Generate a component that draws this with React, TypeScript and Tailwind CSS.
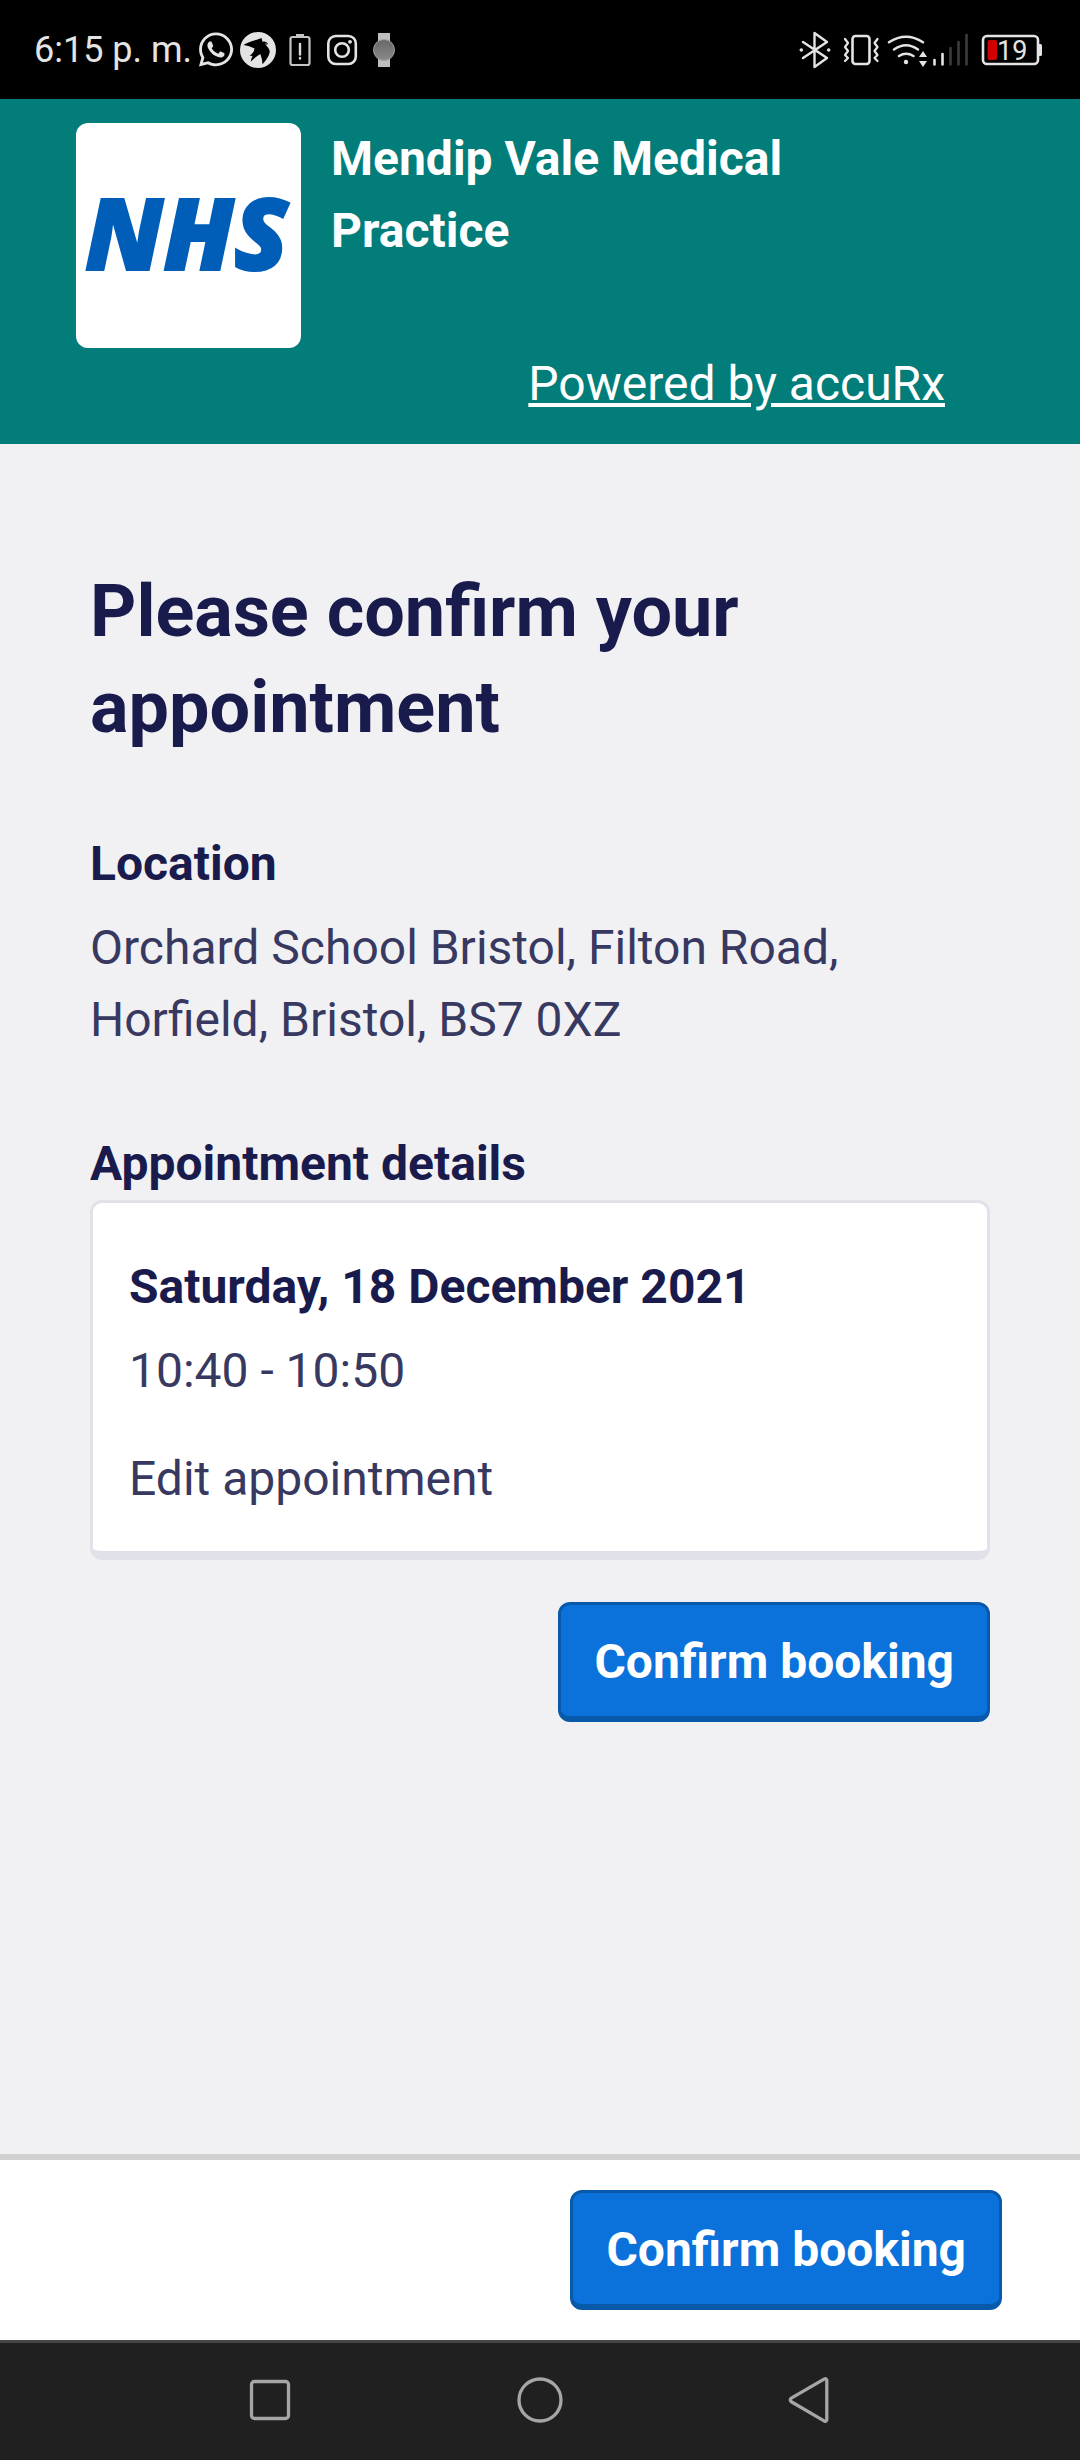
import type { ButtonHTMLAttributes } from 'react';
import { FaWhatsapp } from 'react-icons/fa';

const BluetoothIcon = () => (
  <svg width="42" height="40" viewBox="0 0 42 40" fill="none" aria-hidden="true">
    <path d="M6 12 30 28 17.5 37V3L30 12 6 28" stroke="#e4e4e4" strokeWidth="2.4" strokeLinejoin="round" strokeLinecap="round" />
    <circle cx="4.3" cy="20" r="1.8" fill="#e4e4e4" />
    <circle cx="31.7" cy="20" r="1.8" fill="#e4e4e4" />
  </svg>
);

const VibrateIcon = () => (
  <svg width="40" height="40" viewBox="0 0 40 40" fill="none" stroke="#e4e4e4" strokeLinecap="round" strokeLinejoin="round" aria-hidden="true">
    <rect x="9.5" y="6" width="17" height="28" rx="3" strokeWidth="2.6" />
    <path d="M2 9l3 4-3 4 3 4-3 4 3 3-3 3M34.5 9l-3 4 3 4-3 4 3 4-3 3 3 3" strokeWidth="2.2" />
  </svg>
);

const WifiIcon = () => (
  <svg width="42" height="40" viewBox="0 0 42 40" fill="none" aria-hidden="true">
    <g stroke="#e4e4e4" strokeWidth="2.5" strokeLinecap="round">
      <path d="M2 12.3Q19 1 36 12.3" />
      <path d="M7 19.5Q19 11 31 19.5" />
      <path d="M12 26Q19 21.5 26.5 26" />
    </g>
    <circle cx="19" cy="32" r="2.2" fill="#e4e4e4" />
    <path d="M36 21l4 6h-8zM36 37l4-6h-8z" fill="#e4e4e4" />
  </svg>
);

const SignalIcon = () => (
  <svg width="40" height="40" viewBox="0 0 40 40" strokeWidth="2.6" strokeLinecap="round" aria-hidden="true">
    <path d="M1.5 30v4.5M9.5 24v10.5" stroke="#e4e4e4" />
    <path d="M17.5 18v16.5M25.5 12v22.5M33.5 5v29.5" stroke="#3d3d3d" />
  </svg>
);

const BatteryIcon = () => (
  <svg width="66" height="40" viewBox="0 0 66 40" aria-hidden="true">
    <rect x="6" y="6" width="55" height="28" rx="4" fill="none" stroke="#e4e4e4" strokeWidth="2.6" />
    <path d="M62 14h1.5a1.5 1.5 0 0 1 1.5 1.5v9a1.5 1.5 0 0 1-1.5 1.5H62z" fill="#e4e4e4" />
    <rect x="10.5" y="10" width="9.5" height="20" rx="2" fill="#d00000" />
    <text x="20" y="30" fontSize="27" fill="#e4e4e4" className="font-[Roboto]">19</text>
  </svg>
);

const BirdIcon = () => (
  <svg width="36" height="36" viewBox="0 0 36 36" aria-hidden="true">
    <circle cx="18" cy="18" r="18" fill="#e4e4e4" />
    <path
      d="M3.5 13C8 9.5 14 9 21.5 6l1 3.7q3-1 5.5 2l-2 1.8q4 3.5 3.7 6.5Q29 25 22.5 32.3q-.3-6-2.2-10.3-5 3-9.6 7.7.6-3.2 1.8-5.7l-3-.5q4.5-2.5 5-7Q9.5 13.5 3.5 13z"
      fill="#000"
    />
    <circle cx="26" cy="12" r=".7" fill="#e4e4e4" />
  </svg>
);

const BatteryAlertIcon = () => (
  <svg width="36" height="36" viewBox="0 0 36 36" fill="none" aria-hidden="true">
    <rect x="8.5" y="5" width="19" height="28" rx="2" stroke="#c4c4c4" strokeWidth="2.2" />
    <path d="M14 2h8v3h-8z" fill="#c4c4c4" />
    <path d="M18 12v10.5M18 26v.5" stroke="#d8d8d8" strokeWidth="2.4" strokeLinecap="round" />
  </svg>
);

const InstagramIcon = () => (
  <svg width="36" height="36" viewBox="0 0 36 36" fill="none" stroke="#e4e4e4" strokeWidth="2.6" aria-hidden="true">
    <rect x="4.3" y="4" width="27.5" height="28" rx="7.5" />
    <circle cx="18" cy="18" r="6.8" />
    <circle cx="26" cy="9.8" r="1.9" fill="#e4e4e4" stroke="none" />
  </svg>
);

const WatchIcon = () => (
  <svg width="36" height="36" viewBox="0 0 36 36" aria-hidden="true">
    <defs>
      <linearGradient id="watch-face" x1="0" y1="0" x2="0" y2="1">
        <stop offset="0" stopColor="#686868" />
        <stop offset="1" stopColor="#8a8a8a" />
      </linearGradient>
    </defs>
    <path d="M12 1h12v34H12z" fill="#bdbdbd" />
    <circle cx="18" cy="18" r="10.5" fill="url(#watch-face)" stroke="#a0a0a0" />
  </svg>
);

function StatusBar() {
  return (
    <div className="flex h-[99px] items-center justify-between bg-black pl-[34px] pr-[37px] text-[#e4e4e4]">
      <div className="flex items-center gap-[6px]">
        <span className="text-[36px] leading-[48px]">6:15 p. m.</span>
        <FaWhatsapp className="h-[39px] w-9" />
        <BirdIcon />
        <BatteryAlertIcon />
        <InstagramIcon />
        <WatchIcon />
      </div>
      <div className="flex items-center gap-1">
        <BluetoothIcon />
        <VibrateIcon />
        <WifiIcon />
        <SignalIcon />
        <BatteryIcon />
      </div>
    </div>
  );
}

// The stroke thickens the lettering to the weight of the NHS lozenge type.
function NhsLogo() {
  return (
    <svg className="size-[225px] shrink-0 rounded-xl bg-white" viewBox="0 0 225 225" role="img" aria-label="NHS">
      <text
        x="9"
        y="147"
        fontSize="99"
        fontWeight="800"
        fontStyle="italic"
        fill="#005eb8"
        stroke="#005eb8"
        strokeWidth="2"
        className="font-['Open_Sans']"
      >
        NHS
      </text>
    </svg>
  );
}

function PrimaryButton(props: ButtonHTMLAttributes<HTMLButtonElement>) {
  return (
    <button
      type="button"
      className="rounded-xl border-[3px] border-b-[6px] border-[#0959ab] bg-[#0b72db] px-[33px] pt-[21px] pb-[18px] font-bold text-white"
      {...props}
    />
  );
}

export default function App() {
  return (
    <div className="flex min-h-screen flex-col bg-[#f1f1f4] font-[Roboto,sans-serif] text-[48px] leading-[72px] text-[#383961]">
      <StatusBar />

      <header className="flex gap-[30px] bg-[#027d79] pt-6 pr-[135px] pb-6 pl-[76px] text-white">
        <NhsLogo />
        <div className="flex flex-1 flex-col justify-between gap-[81px]">
          <p className="font-bold">Mendip Vale Medical Practice</p>
          <a href="#" className="self-end underline">
            Powered by accuRx
          </a>
        </div>
      </header>

      <main className="flex-1 px-[90px] pt-[120px]">
        <h1 className="text-[72px] leading-[96px] font-bold text-[#1a1b4d]">Please confirm your appointment</h1>

        <section className="mt-[72px]">
          <h2 className="font-bold text-[#1a1b4d]">Location</h2>
          <p className="mt-3">Orchard School Bristol, Filton Road, Horfield, Bristol, BS7 0XZ</p>
        </section>

        <section className="mt-[72px]">
          <h2 className="font-bold text-[#1a1b4d]">Appointment details</h2>
          <div className="rounded-xl border-[3px] border-b-[9px] border-[#e1e1ea] bg-white px-9 pt-12 pb-9">
            <h3 className="font-bold text-[#1a1b4d]">Saturday, 18 December 2021</h3>
            <p className="mt-3">10:40 - 10:50</p>
            <a href="#" className="mt-9 block">
              Edit appointment
            </a>
          </div>
        </section>

        <div className="mt-[42px] flex justify-end">
          <PrimaryButton>Confirm booking</PrimaryButton>
        </div>
      </main>

      <footer className="flex justify-end border-t-[6px] border-[#d1d1d1] bg-white py-[30px] pr-[78px]">
        <PrimaryButton>Confirm booking</PrimaryButton>
      </footer>

      <nav className="grid h-[120px] grid-cols-3 items-center justify-items-center border-t-[3px] border-[#444646] bg-[#202020] px-[12.5%] pb-[3px]">
        <button type="button" aria-label="Recent apps">
          <svg width="48" height="48" viewBox="0 0 48 48" fill="none" stroke="#a6a6a6" strokeWidth="3.3" className="block">
            <rect x="5.5" y="5.5" width="37" height="37" rx="3" />
          </svg>
        </button>
        <button type="button" aria-label="Home">
          <svg width="48" height="48" viewBox="0 0 48 48" fill="none" stroke="#a6a6a6" strokeWidth="3.3" className="block">
            <circle cx="24" cy="24" r="21" />
          </svg>
        </button>
        <button type="button" aria-label="Back">
          <svg width="48" height="48" viewBox="0 0 48 48" fill="none" stroke="#a6a6a6" strokeWidth="3.3" strokeLinejoin="round" className="block">
            <path d="M38.5 2.9a1.5 1.5 0 0 1 2.3 1.3v39.6a1.5 1.5 0 0 1-2.3 1.3L5.3 25.8a2.1 2.1 0 0 1 0-3.6z" />
          </svg>
        </button>
      </nav>
    </div>
  );
}
